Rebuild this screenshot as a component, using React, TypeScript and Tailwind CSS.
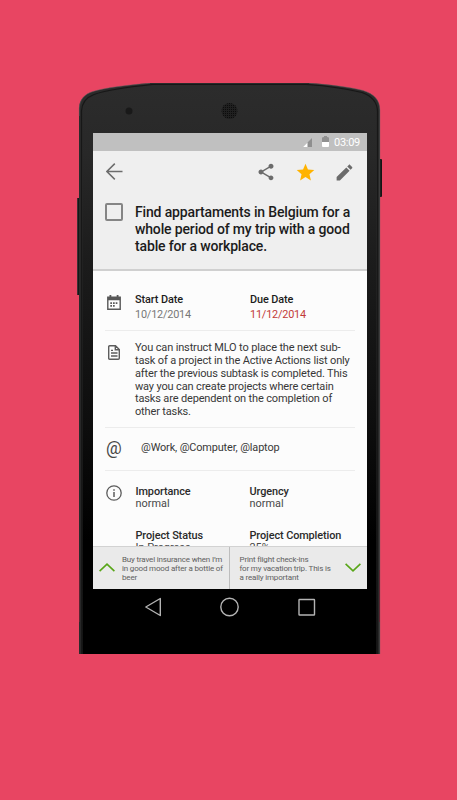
import React from "react";

function PhoneBody() {
  return (
    <svg className="absolute left-0 top-0" width="305" height="571" viewBox="0 0 305 571" fill="none">
      <defs>
        <linearGradient id="body" x1="0" y1="0" x2="0" y2="1">
          <stop offset="0" stopColor="#2c2c2c" />
          <stop offset="0.12" stopColor="#282828" />
          <stop offset="0.3" stopColor="#1c1c1c" />
          <stop offset="0.6" stopColor="#0d0d0d" />
          <stop offset="0.8" stopColor="#000000" />
          <stop offset="1" stopColor="#000000" />
        </linearGradient>
        <pattern id="mesh" width="2" height="2" patternUnits="userSpaceOnUse">
          <rect width="2" height="2" fill="#202020" />
          <rect width="1" height="1" fill="#0c0c0c" />
        </pattern>
      </defs>
      <rect x="0" y="115" width="4" height="97" rx="1" fill="#161616" />
      <path d="M.5 116v95" stroke="#55434a" strokeWidth=".6" />
      <rect x="301" y="76" width="4" height="38" rx="1" fill="#141414" />
      <path d="M2 571V25C2.500 16 8 11 16 8.500C27 5 50 2 73 0H232C252 1.500 272 4 286 7.500C297 11 303 17 303 27V571Z" fill="#2b2b2b" />
      <path d="M5.500 571V29C6 20 10 15.500 18 12.500C29 8.500 52 5 76 2.500H229C250 4 270 7 284 10.500C294 14 299.500 20 299.500 30V571Z" fill="url(#body)" />
      <path d="M4.500 571V28C5 19 9 14.500 17 11.500C28 7.500 51 4 75 1.500H230C251 3 271 6 285 9.500C295 13 300.500 19 300.500 29V571" stroke="#171717" strokeWidth="1.200" />
      <path d="M2.300 33V25C2.800 16 8 11 16 8.500C27 5 50 2 73 .3M232 .3C252 1.500 272 4 286 7.500C297 11 302.800 17 302.800 27V571" stroke="#606060" strokeWidth=".5" />
      <path d="M2.500 487v52M302.500 487v52" stroke="#5a2430" />
      <circle cx="52" cy="28" r="3.500" fill="#191919" />
      <circle cx="152.500" cy="28" r="8" fill="url(#mesh)" />
    </svg>
  );
}

function StatusBar() {
  return (
    <div className="flex h-[18px] items-center justify-end bg-[#c0c0c0] pr-[7px]">
      <svg width="9" height="9" viewBox="0 0 9 9">
        <path d="M0 9L9 0V9Z" fill="#8f8f8f" />
        <path d="M0 9L4.500 4.500V9Z" fill="#fff" />
      </svg>
      <svg width="7" height="11" viewBox="0 0 7 11" className="mb-px ml-[10px]">
        <path d="M0 6V2Q0 1 2 1V0H5V1Q7 1 7 2V6Z" fill="#909090" />
        <path d="M0 6H7V10Q7 11 6 11H1Q0 11 0 10Z" fill="#fff" />
      </svg>
      <span className="ml-[5px] w-[26px] whitespace-nowrap pt-px text-[11px] leading-[18px] tracking-[-0.300px] text-white">03:09</span>
    </div>
  );
}

function Header() {
  return (
    <header className="h-[120px] border-b-2 border-[#d0d0d0] bg-[#efefef]">
      <div className="flex h-[42px] items-center pl-[13px] pr-[12px]">
        <svg className="mb-px" width="17" height="17" viewBox="0 0 17 17" fill="none" stroke="#6c6c6c" strokeWidth="1.500">
          <path d="M16.500 8.500H1M8.800 .6L.9 8.500L8.800 16.400" />
        </svg>
        <svg className="ml-[133px]" width="20" height="20" viewBox="0 0 24 24" fill="#6b6b6b">
          <path d="M18 16.080c-.76 0-1.440.3-1.960.77L8.910 12.700c.05-.23.090-.46.090-.7s-.04-.47-.09-.7l7.050-4.110c.54.5 1.250.81 2.040.81 1.660 0 3-1.340 3-3s-1.340-3-3-3-3 1.340-3 3c0 .24.040.47.090.7L8.040 9.810C7.500 9.310 6.790 9 6 9c-1.660 0-3 1.340-3 3s1.340 3 3 3c.79 0 1.500-.31 2.040-.81l7.120 4.160c-.05.21-.08.43-.08.65 0 1.610 1.310 2.920 2.920 2.920s2.920-1.310 2.920-2.920-1.310-2.920-2.920-2.920z" />
        </svg>
        <svg className="ml-[19px]" width="21" height="21" viewBox="0 0 24 24" fill="#ffb300">
          <path d="M12 17.270L18.180 21l-1.640-7.030L22 9.240l-7.190-.61L12 2 9.190 8.630 2 9.240l5.460 4.730L5.820 21z" />
        </svg>
        <svg className="ml-[18px]" width="21" height="21" viewBox="0 0 24 24" fill="#6b6b6b">
          <path d="M3 17.250V21h3.750L17.810 9.940l-3.750-3.750L3 17.250zM20.710 7.040c.39-.39.39-1.020 0-1.410l-2.340-2.340c-.39-.39-1.020-.39-1.410 0l-1.830 1.830 3.750 3.750 1.830-1.830z" />
        </svg>
      </div>
      <div className="flex pl-[12px] pt-[10px]">
        <div className="h-[18px] w-[18px] rounded-[2px] border-2 border-[#858585]" />
        <h1 className="ml-[12px] mt-px whitespace-nowrap text-[14px] font-medium leading-[17px] tracking-[-0.150px] text-[#1c1c1c]">
          Find appartaments in Belgium for a
          <br />
          whole period of my trip with a good
          <br />
          table for a workplace.
        </h1>
      </div>
    </header>
  );
}

function DatesRow() {
  return (
    <div className="mx-[12px] flex h-[60px] border-b border-[#ececec] pt-[21px]">
      <svg className="ml-[2px] mt-[3px] shrink-0" width="14" height="15" viewBox="0 0 14 15" fill="none">
        <path d="M.8 2.300H13.200V14.200H.8Z" stroke="#585858" strokeWidth="1.400" />
        <path d="M.8 2H13.200V5.300H.8ZM2.500 0H4.300V3H2.500ZM9.700 0H11.500V3H9.700Z" fill="#585858" />
        <path d="M6 7.200H7.700V8.900H6ZM8.700 7.200H10.400V8.900H8.700ZM3.300 10H5V11.700H3.300ZM3.300 7.200H5V8.900H3.300ZM6 10H7.700V11.700H6Z" fill="#585858" />
      </svg>
      <div className="ml-[14px] w-[115px] whitespace-nowrap">
        <div className="text-[10.900px] font-medium leading-[15px] tracking-[-0.100px] text-[#1c1c1c]">Start Date</div>
        <div className="text-[10.900px] leading-[16px] tracking-[-0.200px] text-[#777]">10/12/2014</div>
      </div>
      <div className="whitespace-nowrap">
        <div className="text-[10.900px] font-medium leading-[15px] tracking-[-0.100px] text-[#1c1c1c]">Due Date</div>
        <div className="text-[10.900px] leading-[16px] tracking-[-0.200px] text-[#c23b38]">11/12/2014</div>
      </div>
    </div>
  );
}

function NotesRow() {
  return (
    <div className="mx-[12px] flex h-[97px] border-b border-[#ececec] pt-[10px]">
      <svg className="ml-[3px] mt-[4px] shrink-0" width="12" height="15" viewBox="0 0 12 15" fill="none" stroke="#5c5c5c" strokeWidth="1.400">
        <path d="M1.700 .7H7.500L11.300 4.500V13.300Q11.300 14.300 10.300 14.300H1.700Q.7 14.300 .7 13.300V1.700Q.7 .7 1.700 .7ZM7.300 .7V4.800H11.300" />
        <path d="M3 8H9.500M3 11H9.500M3 5.300H5" strokeWidth="1.300" />
      </svg>
      <p className="ml-[15px] mt-px whitespace-nowrap text-[11px] leading-[12.850px] tracking-[-0.150px] text-[#383838]">
        You can instruct MLO to place the next sub-
        <br />
        task of a project in the Active Actions list only
        <br />
        after the previous subtask is completed. This
        <br />
        way you can create projects where certain
        <br />
        tasks are dependent on the completion of
        <br />
        other tasks.
      </p>
    </div>
  );
}

function ContextsRow() {
  return (
    <div className="mx-[12px] flex h-[43px] border-b border-[#ececec]">
      <span className="ml-px mt-[10px] w-[16px] text-[17.500px] leading-[20px] text-[#484848]">@</span>
      <span className="ml-[19px] mt-[12px] whitespace-nowrap text-[10.900px] leading-[15px] tracking-[-0.130px] text-[#383838]">@Work, @Computer, @laptop</span>
    </div>
  );
}

function Field({ label, value }: { label: string; value: string }) {
  return (
    <div className="w-[114px] whitespace-nowrap">
      <div className="text-[10.900px] font-medium leading-[13px] tracking-[-0.100px] text-[#2a2a2a]">{label}</div>
      <div className="text-[10.900px] leading-[12px] text-[#484848]">{value}</div>
    </div>
  );
}

function InfoRow() {
  return (
    <div className="ml-[12px] flex pt-[14px]">
      <svg className="ml-px shrink-0" width="16" height="16" viewBox="0 0 16 16" fill="none" stroke="#5c5c5c">
        <circle cx="8" cy="8" r="7.200" strokeWidth="1.300" />
        <path d="M8 7V12M8 4.200V5.700" strokeWidth="1.500" />
      </svg>
      <div className="ml-[13.500px] grid grid-cols-[114px_114px] gap-y-[19px]">
        <Field label="Importance" value="normal" />
        <Field label="Urgency" value="normal" />
        <Field label="Project Status" value="In Progress" />
        <Field label="Project Completion" value="25%" />
      </div>
    </div>
  );
}

function BottomBar() {
  return (
    <div className="flex h-[43px] border-t border-[#d2d2d2] bg-[#eaeaea] text-[8px] leading-[9px] tracking-[-0.170px] text-[#606060]">
      <div className="flex w-[137px] border-r border-[#bdbdbd]">
        <svg className="ml-[6px] mt-[16px] shrink-0" width="16" height="9" viewBox="0 0 16 9" fill="none" stroke="#58a618" strokeWidth="1.600">
          <path d="M.6 8.200L8 1.200L15.400 8.200" />
        </svg>
        <p className="ml-[7px] mt-[8px] whitespace-nowrap">
          Buy travel insurance when I’m
          <br />
          in good mood after a bottle of
          <br />
          beer
        </p>
      </div>
      <div className="flex flex-1 justify-between">
        <p className="ml-[9.500px] mt-[8px] whitespace-nowrap">
          Print flight check-ins
          <br />
          for my vacation trip. This is
          <br />
          a really important
        </p>
        <svg className="mr-[6.500px] mt-[16px] shrink-0" width="16" height="9" viewBox="0 0 16 9" fill="none" stroke="#58a618" strokeWidth="1.600">
          <path d="M.6 .8L8 7.800L15.400 .8" />
        </svg>
      </div>
    </div>
  );
}

function NavBar() {
  return (
    <div className="flex h-[36px] items-center pl-[51px]">
      <svg width="18" height="20" viewBox="0 0 18 20" fill="none" stroke="#b4b4b4" strokeWidth="1.400">
        <path d="M16.300 1.500V18.500L1.800 10Z" strokeLinejoin="round" />
      </svg>
      <svg className="ml-[58px]" width="20" height="20" viewBox="0 0 20 20" fill="none" stroke="#b4b4b4" strokeWidth="1.400">
        <circle cx="9.500" cy="10" r="8.700" />
      </svg>
      <svg className="ml-[57px]" width="20" height="20" viewBox="0 0 20 20" fill="none" stroke="#b4b4b4" strokeWidth="1.400">
        <rect x="2" y="2.500" width="15.500" height="15.500" rx=".5" />
      </svg>
    </div>
  );
}

export default function App() {
  return (
    <div className="h-[800px] w-[457px] overflow-hidden bg-[#e84562] pl-[77px] pt-[83px] font-['Roboto',sans-serif]">
      <div className="relative h-[571px] w-[305px]">
        <PhoneBody />
        <div className="relative flex flex-col pl-[16px] pt-[50px]">
          <div className="flex h-[456px] w-[274px] flex-col overflow-hidden bg-[#fcfcfc]">
            <StatusBar />
            <Header />
            <div className="h-[275px] overflow-hidden">
              <DatesRow />
              <NotesRow />
              <ContextsRow />
              <InfoRow />
            </div>
            <BottomBar />
          </div>
          <NavBar />
        </div>
      </div>
    </div>
  );
}
